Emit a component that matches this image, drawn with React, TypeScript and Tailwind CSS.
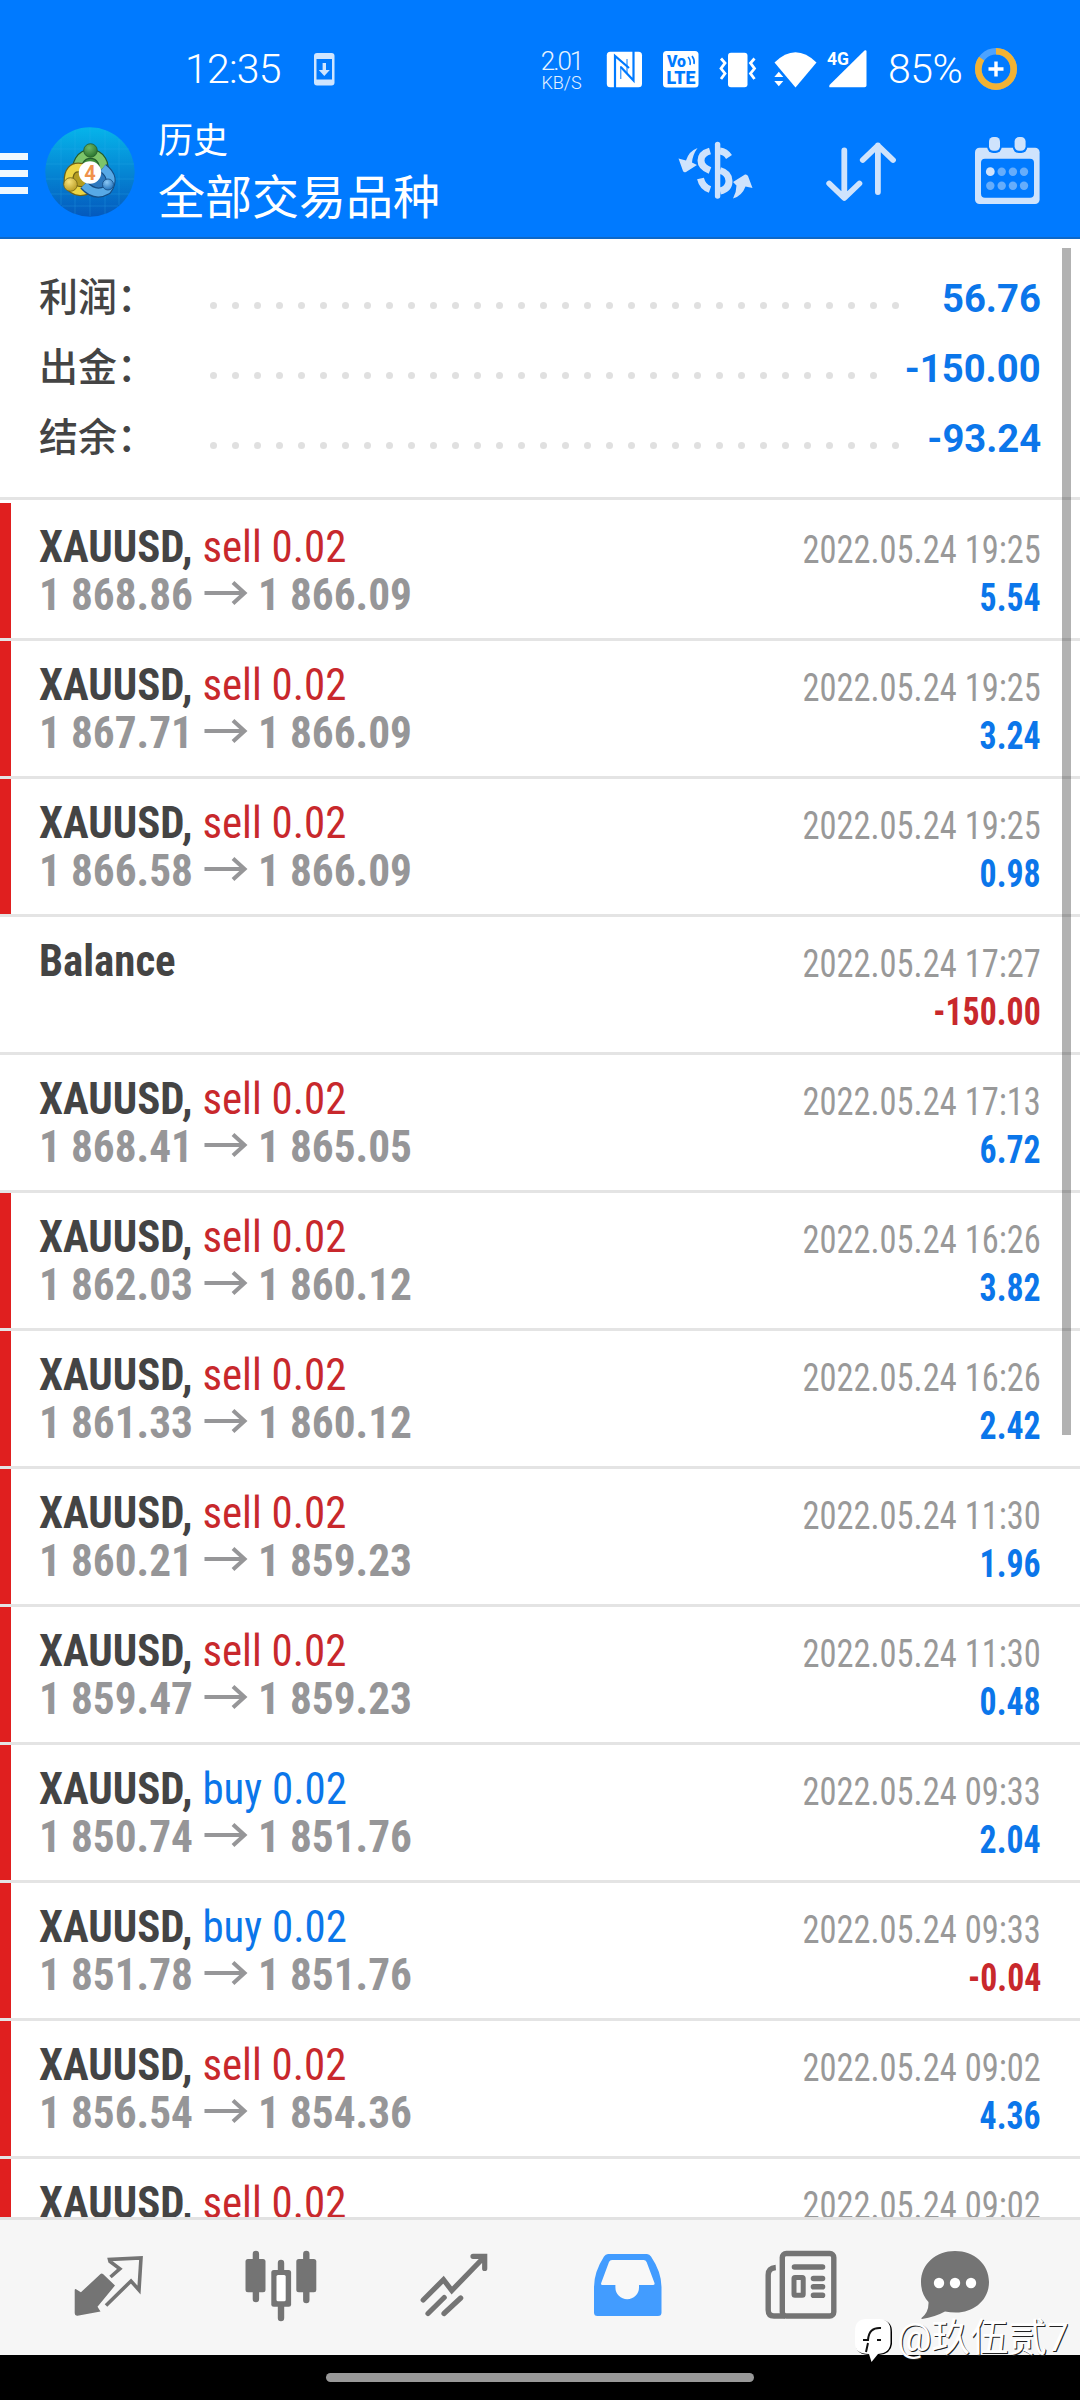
import type { ReactNode } from 'react';

interface Deal {
  symbol: string;
  side?: 'sell' | 'buy';
  volume?: string;
  open?: string;
  close?: string;
  time: string;
  profit: string;
  marked: boolean;
}

const summary = [
  { label: '利润', value: '56.76', dots: 32 },
  { label: '出金', value: '-150.00', dots: 31 },
  { label: '结余', value: '-93.24', dots: 32 },
];

const deals: Deal[] = [
  { symbol: 'XAUUSD', side: 'sell', volume: '0.02', open: '1 868.86', close: '1 866.09', time: '2022.05.24 19:25', profit: '5.54', marked: true },
  { symbol: 'XAUUSD', side: 'sell', volume: '0.02', open: '1 867.71', close: '1 866.09', time: '2022.05.24 19:25', profit: '3.24', marked: true },
  { symbol: 'XAUUSD', side: 'sell', volume: '0.02', open: '1 866.58', close: '1 866.09', time: '2022.05.24 19:25', profit: '0.98', marked: true },
  { symbol: 'Balance', time: '2022.05.24 17:27', profit: '-150.00', marked: false },
  { symbol: 'XAUUSD', side: 'sell', volume: '0.02', open: '1 868.41', close: '1 865.05', time: '2022.05.24 17:13', profit: '6.72', marked: false },
  { symbol: 'XAUUSD', side: 'sell', volume: '0.02', open: '1 862.03', close: '1 860.12', time: '2022.05.24 16:26', profit: '3.82', marked: true },
  { symbol: 'XAUUSD', side: 'sell', volume: '0.02', open: '1 861.33', close: '1 860.12', time: '2022.05.24 16:26', profit: '2.42', marked: true },
  { symbol: 'XAUUSD', side: 'sell', volume: '0.02', open: '1 860.21', close: '1 859.23', time: '2022.05.24 11:30', profit: '1.96', marked: true },
  { symbol: 'XAUUSD', side: 'sell', volume: '0.02', open: '1 859.47', close: '1 859.23', time: '2022.05.24 11:30', profit: '0.48', marked: true },
  { symbol: 'XAUUSD', side: 'buy', volume: '0.02', open: '1 850.74', close: '1 851.76', time: '2022.05.24 09:33', profit: '2.04', marked: true },
  { symbol: 'XAUUSD', side: 'buy', volume: '0.02', open: '1 851.78', close: '1 851.76', time: '2022.05.24 09:33', profit: '-0.04', marked: true },
  { symbol: 'XAUUSD', side: 'sell', volume: '0.02', open: '1 856.54', close: '1 854.36', time: '2022.05.24 09:02', profit: '4.36', marked: true },
  { symbol: 'XAUUSD', side: 'sell', volume: '0.02', time: '2022.05.24 09:02', profit: '', marked: true },
];

function StatusBar() {
  return (
    <div className="flex h-[106px] items-center pt-[32px] text-white">
      <span className="ml-[185px] w-[98px] text-[41px] leading-none font-[350] tracking-[-0.8px] whitespace-nowrap">12:35</span>
      {/* Download to phone */}
      <svg className="ml-[30px] h-[44px] w-[24px]" viewBox="0 0 24 44">
        <rect x="1" y="6" width="20.500" height="32.500" rx="3" fill="#cfe5ff" />
        <rect x="3.500" y="12" width="15.500" height="20.500" fill="#007aff" />
        <path d="M11.300 16v8" stroke="#cfe5ff" strokeWidth="3.400" />
        <path d="M5.800 23h11l-5.500 6z" fill="#cfe5ff" />
      </svg>

      <div className="ml-[203px] flex w-[43px] flex-col items-center font-[350] text-[#e6f2ff]">
        <span className="text-[26px] leading-[27px] tracking-[-2px]">2.01</span>
        <span className="text-[18px] leading-[16px] whitespace-nowrap">KB/S</span>
      </div>

      {/* NFC */}
      <svg className="ml-[23px] h-[44px] w-[37px]" viewBox="0 0 37 44">
        <rect x="0.800" y="4.700" width="35.200" height="35.600" rx="3.500" fill="#fff" />
        <path d="M9 41V9L23 21M14.800 20L27.500 33.500V4" fill="none" stroke="#007aff" strokeWidth="2.200" />
        <path d="M14.800 19V32M21 12V26" fill="none" stroke="#007aff" strokeWidth="1" />
      </svg>

      {/* VoLTE */}
      <svg className="ml-[19px] h-[44px] w-[37px]" viewBox="0 0 37 44">
        <rect x="1" y="4" width="35.500" height="36.500" rx="3.500" fill="#fff" />
        <text x="5" y="20" fontSize="16" fontWeight="900" fill="#007aff" textLength="19" lengthAdjust="spacingAndGlyphs">Vo</text>
        <text x="4.500" y="37" fontSize="19" fontWeight="900" fill="#007aff" textLength="29" lengthAdjust="spacingAndGlyphs">LTE</text>
        <path d="M26 10q3 3 2 8M30 9q3 4 2 8" fill="none" stroke="#007aff" strokeWidth="1.600" />
      </svg>

      {/* Vibrate */}
      <svg className="ml-[20px] h-[44px] w-[38px]" viewBox="0 0 38 44">
        <rect x="9" y="5.700" width="19.500" height="34.600" rx="3" fill="#fff" />
        <path d="M2 11.500l4 4.500-4 5.500 4 5-4 5.500M35.500 11.500l-4 4.500 4 5.500-4 5 4 5.500" fill="none" stroke="#fff" strokeWidth="2.800" />
      </svg>

      {/* Wifi */}
      <svg className="ml-[17px] h-[44px] w-[43px]" viewBox="0 0 43 44">
        <path d="M0.500 15.500Q21.500-5 42.500 15.500L21.500 40.500z" fill="#fff" />
        <path d="M0.300 30l4.500-5.200 4.500 5.200zM0.300 34l4.500 5.300 4.500-5.300z" fill="#fff" />
      </svg>

      {/* Mobile signal */}
      <svg className="ml-[10px] h-[44px] w-[42px]" viewBox="0 0 42 44">
        <text x="0" y="17.500" fontSize="19" fontWeight="700" fill="#fff" textLength="22" lengthAdjust="spacingAndGlyphs">4G</text>
        <path d="M2.500 40.300Q1.500 39 3 37.500L37.500 3.500Q39.500 2.500 39.500 4.500V38.500Q39.500 40.300 37.500 40.300z" fill="#fff" />
      </svg>

      <span className="ml-[19px] w-[80px] text-[41px] leading-none font-[350] tracking-[-0.5px] whitespace-nowrap">85%</span>

      {/* Battery ring */}
      <svg className="ml-[6px] h-[44px] w-[44px]" viewBox="0 0 44 44">
        <circle cx="22" cy="22" r="17.700" fill="none" stroke="#4da3ff" strokeWidth="6.600" />
        <circle cx="22" cy="22" r="17.700" fill="none" stroke="#f2b233" strokeWidth="6.600" pathLength="100" strokeDasharray="85 15" transform="rotate(-90 22 22)" />
        <path d="M22 14.500v15M14.500 22h15" stroke="#fff" strokeWidth="3.400" />
      </svg>
    </div>
  );
}

function AppLogo() {
  return (
    <svg className="ml-[17px] h-[90px] w-[90px]" viewBox="0 0 90 90">
      <defs>
        <linearGradient id="sky" x1="0" y1="0" x2="0" y2="1">
          <stop offset="0" stopColor="#06b4ea" />
          <stop offset="1" stopColor="#0459bd" />
        </linearGradient>
        <radialGradient id="green" cx="0.4" cy="0.3" r="0.8">
          <stop offset="0" stopColor="#6fb868" />
          <stop offset="1" stopColor="#1f6a26" />
        </radialGradient>
        <radialGradient id="yellow" cx="0.4" cy="0.3" r="0.8">
          <stop offset="0" stopColor="#f7e27a" />
          <stop offset="1" stopColor="#b3941a" />
        </radialGradient>
        <radialGradient id="blue" cx="0.4" cy="0.3" r="0.8">
          <stop offset="0" stopColor="#8cc8f5" />
          <stop offset="1" stopColor="#1768b4" />
        </radialGradient>
      </defs>
      <circle cx="45" cy="45" r="44.700" fill="url(#sky)" />
      <path d="M16 12V78M30 3V87M45 1V89M60 3V87M74 12V78M6 22H84M1 37H89M1 52H89M6 67H84M17 79H73" stroke="#33b5f0" strokeWidth="0.700" opacity="0.350" />
      <path d="M34 46A13 13 0 1 1 57 46" fill="#3f8f3a" stroke="#245c2c" strokeWidth="10" />
      <path d="M34 46A13 13 0 1 1 57 46" fill="none" stroke="#7cc46a" strokeWidth="7.500" />
      <path d="M37 41Q23 38 23.500 56Q29 67 42 63" fill="#b59d22" stroke="#6f6216" strokeWidth="10" />
      <path d="M37 41Q23 38 23.500 56Q29 67 42 63" fill="none" stroke="#ecd544" strokeWidth="7.500" />
      <path d="M39 58Q50 70 62 63Q71 51 58 41" fill="#2d78be" stroke="#154d84" strokeWidth="10" />
      <path d="M39 58Q50 70 62 63Q71 51 58 41" fill="none" stroke="#57a9e6" strokeWidth="7.500" />
      <circle cx="45.500" cy="23.500" r="6.800" fill="url(#green)" stroke="#245c2c" strokeWidth="0.800" />
      <circle cx="25.500" cy="57.500" r="6.800" fill="url(#yellow)" stroke="#6f6216" strokeWidth="0.800" />
      <circle cx="63" cy="57.500" r="5.500" fill="url(#blue)" stroke="#154d84" strokeWidth="0.800" />
      <circle cx="45" cy="45.500" r="11.200" fill="#fff" />
      <text x="45" y="52.500" textAnchor="middle" fontSize="20" fontWeight="700" fill="#f0924a">4</text>
    </svg>
  );
}

function AppBar() {
  return (
    <div className="flex h-[133px] items-center border-b-2 border-[#0d68c8] text-white">
      <div className="mt-[4px] flex w-[28px] flex-col gap-[9.500px]">
        <div className="h-[7.500px] bg-[#eef8ff]"></div>
        <div className="h-[7.500px] bg-[#eef8ff]"></div>
        <div className="h-[7.500px] bg-[#eef8ff]"></div>
      </div>
      <AppLogo />
      <div className="mt-[6px] ml-[23px] flex w-[300px] flex-col">
        <span className="text-[35px] leading-[46px]">历史</span>
        <span className="text-[47px] leading-[66px] whitespace-nowrap">全部交易品种</span>
      </div>

      {/* Symbol filter */}
      <svg className="ml-[220px] h-[70px] w-[76px]" viewBox="0 0 76 70">
        <g fill="none" stroke="#cfe3fc" strokeWidth="7">
          <path d="M39.600 7.500V59" strokeWidth="5.400" strokeLinecap="round" />
          <path d="M32 14Q23 16.500 23 23.500Q23 30 32 33.500M42 14Q47.500 14.500 51 20" />
          <path d="M42 33.500Q51 36 51 44Q51 52 42 54M22.500 41.500Q24.500 50 32 52.500" />
        </g>
        <path d="M19.500 11Q11 14 8 23.500L0.500 21.500L5 34Q6 36 8 35L19 28L14 25.500Q14.500 18 19.500 11zM55 61.500Q58.500 55 58.500 48.500L55 45L67 37.500Q69 37 70 39L74.500 51L67.500 49.500Q64 59 55 61.500z" fill="#cfe3fc" />
      </svg>

      {/* Sort */}
      <svg className="ml-[72px] h-[70px] w-[71px]" viewBox="0 0 71 70" fill="none" stroke="#cfe3fc" strokeWidth="5.800" strokeLinecap="round" strokeLinejoin="round">
        <path d="M18.300 13.500V60.500M3.200 46.500L18.300 61L33.400 46.500" />
        <path d="M51.900 55V8.500M36.800 23L51.900 8.500L67 23" />
      </svg>

      {/* Period */}
      <svg className="ml-[78px] h-[70px] w-[66px]" viewBox="0 0 66 70">
        <rect x="0" y="10.700" width="64.600" height="56.300" rx="4.500" fill="#cfe3fc" />
        <rect x="6" y="21.700" width="53" height="39" rx="4" fill="#007aff" />
        <rect x="12.200" y="0" width="14.500" height="16" rx="6" fill="#007aff" />
        <rect x="37.800" y="0" width="14.500" height="16" rx="6" fill="#007aff" />
        <rect x="14" y="0" width="11" height="13.700" rx="4.500" fill="#cfe3fc" />
        <rect x="39.600" y="0" width="11" height="13.700" rx="4.500" fill="#cfe3fc" />
        <circle cx="15.300" cy="34.700" r="4.400" fill="#cfe3fc" />
        <g fill="#66adfb">
          <circle cx="26.700" cy="34.700" r="4.200" />
          <circle cx="37.900" cy="34.700" r="4.200" />
          <circle cx="49" cy="34.700" r="4.200" />
          <circle cx="15.300" cy="48.700" r="4.200" />
          <circle cx="26.700" cy="48.700" r="4.200" />
          <circle cx="37.900" cy="48.700" r="4.200" />
          <circle cx="49" cy="48.700" r="4.200" />
        </g>
      </svg>
    </div>
  );
}

function SummaryRow({ label, value, dots }: { label: string; value: string; dots: number }) {
  return (
    <div className="flex h-[70px] items-center pr-[39px] pl-[39px] text-[39px]">
      <span className="w-[171px] font-medium whitespace-nowrap text-[#444]">{label}：</span>
      <div className="mt-[15px] flex gap-[15px]">
        {Array.from({ length: dots }, (_, i) => (
          <div key={i} className="size-[7px] rounded-full bg-[#e0e0e0]"></div>
        ))}
      </div>
      <span className="mt-[2px] ml-auto origin-right scale-x-[0.98] font-bold text-[#0b76ea]">{value}</span>
    </div>
  );
}

function DealRow({ deal }: { deal: Deal }) {
  return (
    <div className="flex h-[138px] shrink-0 border-t-[3px] border-[#e4e4e4] font-stretch-condensed first:border-white">
      <div className={deal.marked ? 'w-[11px] bg-[#e01f1f]' : 'w-[11px]'}></div>
      <div className="flex flex-1 justify-between pt-[20px] pr-[39px] pl-[28px]">
        <div className="flex flex-col text-[45px] leading-[48px] font-bold whitespace-nowrap">
          <div className="origin-left scale-x-[0.953] text-[#444]">
            {deal.symbol}
            {deal.side && (
              <>
                ,{' '}
                <span className={deal.side === 'sell' ? 'font-normal text-[#c8282c]' : 'font-normal text-[#0b76ea]'}>
                  {deal.side} {deal.volume}
                </span>
              </>
            )}
          </div>
          {deal.open && (
            <div className="flex items-center text-[#969698]">
              <span className="w-[165px] origin-left scale-x-[0.963]">{deal.open}</span>
              <svg className="-mt-[5px] h-[26px] w-[44px]" viewBox="0 0 44 26" fill="none" stroke="#969698" strokeWidth="4">
                <path d="M0.500 13H41M29 2.500L40.500 13L29 23.500" />
              </svg>
              <span className="ml-[10px] origin-left scale-x-[0.963]">{deal.close}</span>
            </div>
          )}
        </div>
        <div className="flex flex-col items-end pt-[3px] text-[38px] leading-[48px] whitespace-nowrap">
          <span className="origin-right scale-x-[0.907] text-[#999]">{deal.time}</span>
          <span className={deal.profit.startsWith('-') ? 'origin-right scale-x-[0.89] font-bold text-[#c8282c]' : 'origin-right scale-x-[0.89] font-bold text-[#0b76ea]'}>
            {deal.profit}
          </span>
        </div>
      </div>
    </div>
  );
}

function TabIcon({ className, children }: { className: string; children: ReactNode }) {
  return (
    <svg className={`h-[72px] w-[72px] shrink-0 ${className}`} viewBox="0 0 72 72">
      {children}
    </svg>
  );
}

function TabBar() {
  return (
    <div className="flex h-[138px] shrink-0 items-center border-t-[3px] border-[#e2e2e2] bg-[#f6f6f6] pb-[3px]">
      {/* Quotes */}
      <TabIcon className="ml-[74px]">
        <path d="M0.700 40Q1 38.500 2.500 39.500L6.900 42.300L26.500 24Q27.600 23 29 24L41 35.500L23.500 56.700L26.500 61.500L3.500 65.700Q0.700 66 0.700 63.300z" fill="#747474" />
        <path d="M36.500 27L45.800 18.800L36 11.500L35.500 9.500L67 8L65 40L57 31L32 55.500" fill="none" stroke="#747474" strokeWidth="3.600" />
      </TabIcon>
      {/* Chart */}
      <TabIcon className="ml-[99px]">
        <path d="M10.900 4V49M61.300 4V50M36 13V68" stroke="#747474" strokeWidth="6.400" strokeLinecap="round" />
        <rect x="0.500" y="9" width="20" height="33.300" rx="2.500" fill="#747474" />
        <rect x="51.300" y="9" width="20" height="33.300" rx="2.500" fill="#747474" />
        <rect x="26.300" y="20" width="19.800" height="36.700" rx="2.500" fill="#747474" />
        <rect x="31.500" y="25" width="9.200" height="26.200" rx="1.500" fill="#fff" />
      </TabIcon>
      {/* Trade */}
      <TabIcon className="ml-[103px]">
        <path d="M3.200 50L23.500 29.700L31.800 40.500L64.500 6.700M53 6.300H64.700V18.500M8 63.500L24.200 47.500M24 63.500L40.700 48" fill="none" stroke="#747474" strokeWidth="5.200" strokeLinecap="round" />
      </TabIcon>
      {/* History */}
      <TabIcon className="ml-[101px]">
        <path d="M15 4H54Q56.500 4 58 6.500Q68.500 22 68.500 37V62.500Q68.500 66 65 66H4.500Q1 66 1 62.500V37Q1 22 11 6.500Q12.500 4 15 4z" fill="#429cff" />
        <path d="M19 10H50.500Q52.800 10 53.600 12L61.500 33Q62 35 60 35H46V37.500A11.800 11.800 0 0 1 22.400 37.500V35H9.500Q7.500 35 8.200 33L16 12Q16.800 10 19 10z" fill="#f8f8f8" />
      </TabIcon>
      {/* News */}
      <TabIcon className="ml-[100px]">
        <rect x="17.300" y="3.500" width="51.500" height="62.500" rx="4" fill="none" stroke="#747474" strokeWidth="5.400" />
        <path d="M10.800 17.500Q3.200 18 3.200 25V60Q3.200 66 9 66H20" fill="none" stroke="#747474" strokeWidth="5.400" />
        <path d="M29.500 17H57.500M48.500 28.500H57.500M48.500 36.800H57.500M48.500 45.200H57.500" stroke="#747474" strokeWidth="5.600" strokeLinecap="round" />
        <rect x="29" y="27.500" width="9.200" height="17.800" rx="1" fill="none" stroke="#747474" strokeWidth="5" />
      </TabIcon>
      {/* Chat */}
      <TabIcon className="ml-[83px]">
        <path d="M35 1C54 1 69 14 69 32C69 50 54 62.500 36 62.500Q30 62.500 25 61.500Q15 67 2 69Q1 69 1.500 68Q9 62 8.500 52Q1 44 1 32C1 14 16 1 35 1z" fill="#747474" />
        <g fill="#fff">
          <circle cx="19" cy="33" r="5.200" />
          <circle cx="35" cy="33" r="5.200" />
          <circle cx="51" cy="33" r="5.200" />
        </g>
      </TabIcon>
    </div>
  );
}

function Watermark() {
  return (
    <div className="absolute top-[2316px] left-[854px] flex items-start text-white">
      <svg className="h-[48px] w-[40px]" viewBox="0 0 40 48">
        <path d="M14 4H26Q38 4 38 16V28Q37 38 25 39L18 47L16 39Q2 39 2 28V16Q2 4 14 4z" fill="#000" />
        <path d="M12.500 3H24.500Q36.500 3 36.500 15V27Q36 37 24 38L17.500 46L15 38Q1 38 1 27V15Q1 3 12.500 3z" fill="#fff" />
        <path d="M9 24H14Q15 11 27 12M23 24H27M14 27L12 36" fill="none" stroke="#111" strokeWidth="2" />
      </svg>
      <span className="ml-[3px] text-[38.500px] leading-[44px] whitespace-nowrap [text-shadow:1px_1px_0_#222]">@玖伍贰7</span>
    </div>
  );
}

export default function App() {
  return (
    <div className="relative flex h-[2400px] w-[1080px] flex-col overflow-hidden bg-white font-['Roboto','Noto_Sans_CJK_SC',sans-serif]">
      <header className="h-[239px] shrink-0 bg-[#007aff]">
        <StatusBar />
        <AppBar />
      </header>

      <section className="h-[261px] shrink-0 border-b-[3px] border-[#e4e4e4] pt-[24px]">
        {summary.map(row => (
          <SummaryRow key={row.label} {...row} />
        ))}
      </section>

      <main className="flex h-[1717px] shrink-0 flex-col overflow-hidden">
        {deals.map((deal, i) => (
          <DealRow key={i} deal={deal} />
        ))}
      </main>

      <TabBar />

      {/* System gesture bar */}
      <div className="flex h-[45px] shrink-0 justify-center bg-black pt-[18px]">
        <div className="h-[9px] w-[428px] rounded-full bg-[#999]"></div>
      </div>

      {/* Scrollbar */}
      <div className="absolute top-[248px] right-[9px] h-[1187px] w-[9px] bg-black/30"></div>
      <Watermark />
    </div>
  );
}
